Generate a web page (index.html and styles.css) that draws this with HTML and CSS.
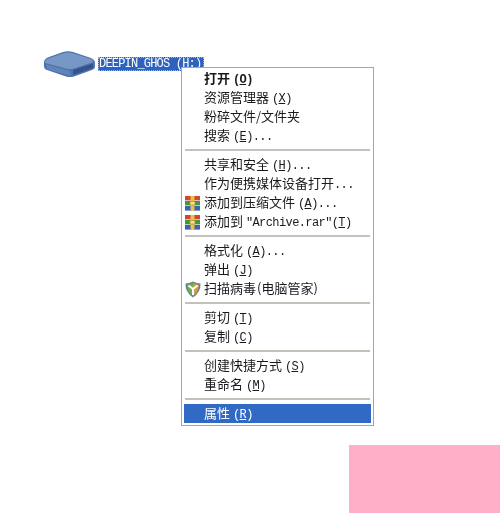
FILE: index.html
```html
<!DOCTYPE html>
<html lang="zh">
<head>
<meta charset="utf-8">
<title>右键菜单</title>
<link rel="stylesheet" href="styles.css">
</head>
<body>
<svg width="0" height="0" class="defs">
  <defs>
    <g id="rar">
      <rect x="0" y="0" width="7" height="4.4" fill="#d8452e"/>
      <rect x="8" y="0" width="7" height="4.4" fill="#d8452e"/>
      <rect x="0" y="5" width="7" height="4.4" fill="#3f9a3c"/>
      <rect x="8" y="5" width="7" height="4.4" fill="#3f9a3c"/>
      <rect x="0" y="10" width="7" height="4.6" fill="#3a62b8"/>
      <rect x="8" y="10" width="7" height="4.6" fill="#3a62b8"/>
      <rect x="5.5" y="0" width="4" height="14.6" fill="#e9c04a"/>
      <rect x="5" y="5.5" width="5" height="3.5" fill="#f6e08c" stroke="#a5822a" stroke-width=".6"/>
    </g>
  </defs>
</svg>
<div class="desktop">
  <svg class="drive" width="53" height="28" viewBox="0 0 53 28">
    <path d="M1 12 Q1 9 6 7 L20 2 Q25 0.5 30 2 L48 8 Q52 10 52 13 V17 Q52 19 49 20 L31 26.5 Q27 27.5 23 26.5 L4 20 Q1 19 1 16 Z" fill="#4f73ab"/>
    <path d="M2 11 Q3 9 7 8 L21 3 Q25 2 29 3 L48 9 Q51 10.5 49 12.5 L31 18.5 Q27 19.5 23 18.5 L4 13.5 Q1 12.5 2 11 Z" fill="#7797c6"/>
    <path d="M30 20 L50 13.5 V18 L30 25 Z" fill="#34528d"/>
    <path d="M3 14.5 L26 20.5 L28 26 L4 19 Z" fill="#5f84bb"/>
  </svg>
  <span class="drive-label">DEEPIN_GHOS (H:)</span>
</div>
<div class="menu">
  <div class="item strong">打开 <span class="lat">(<u>O</u>)</span></div>
  <div class="item">资源管理器 <span class="lat">(<u>X</u>)</span></div>
  <div class="item">粉碎文件/文件夹</div>
  <div class="item">搜索 <span class="lat">(<u>E</u>)...</span></div>
  <div class="sep"></div>
  <div class="item">共享和安全 <span class="lat">(<u>H</u>)...</span></div>
  <div class="item">作为便携媒体设备打开<span class="lat">...</span></div>
  <div class="item"><svg class="icon icon-rar" width="15" height="15" viewBox="0 0 15 15"><use href="#rar"/></svg>添加到压缩文件 <span class="lat">(<u>A</u>)...</span></div>
  <div class="item"><svg class="icon icon-rar" width="15" height="15" viewBox="0 0 15 15"><use href="#rar"/></svg>添加到 <span class="lat">"Archive.rar"(<u>T</u>)</span></div>
  <div class="sep"></div>
  <div class="item">格式化 <span class="lat">(<u>A</u>)...</span></div>
  <div class="item">弹出 <span class="lat">(<u>J</u>)</span></div>
  <div class="item"><svg class="icon" width="16" height="17" viewBox="0 0 16 17">
    <path d="M8 0.5 Q12 2.5 15.5 2.5 Q16 11 8 16.5 Q0 11 0.5 2.5 Q4 2.5 8 0.5 Z" fill="#5d8a90"/>
    <path d="M8 2 Q11 3.5 14 3.8 Q14 10.5 8 15 Z" fill="#d99a3a"/>
    <path d="M8 2 Q5 3.5 2 3.8 Q2 10.5 8 15 Z" fill="#6fae4a"/>
    <path d="M3.5 4.5 L8 8 L12.5 4.5 M8 8 V14" fill="none" stroke="#fff" stroke-width="2"/>
  </svg>扫描病毒<span class="paren">(电脑管家)</span></div>
  <div class="sep"></div>
  <div class="item">剪切 <span class="lat">(<u>T</u>)</span></div>
  <div class="item">复制 <span class="lat">(<u>C</u>)</span></div>
  <div class="sep"></div>
  <div class="item">创建快捷方式 <span class="lat">(<u>S</u>)</span></div>
  <div class="item">重命名 <span class="lat">(<u>M</u>)</span></div>
  <div class="sep"></div>
  <div class="item active">属性 <span class="lat">(<u>R</u>)</span></div>
</div>
<div class="pink"></div>
</body>
</html>
```
FILE: styles.css
```css
* { box-sizing: border-box; }
html, body { margin: 0; height: 513px; overflow: hidden; background: #fff; }
body { position: relative; font-family: "Noto Sans CJK SC", "Liberation Sans", sans-serif; color: #1a1a1a; }
.defs { position: absolute; }
.desktop { display: flex; align-items: flex-start; padding: 50px 0 0 43px; filter: blur(.3px); }
.drive { display: block; flex: none; }
.drive-label {
  margin: 7px 0 0 2px;
  width: 106px;
  height: 14px;
  background: #2f62bd;
  color: #fff;
  font: 12px/13px "Liberation Mono", monospace;
  letter-spacing: -.8px;
  white-space: pre;
  overflow: hidden;
  padding: 1px 0 0 1px;
  outline: 1px dotted #9fb6e0;
  outline-offset: -1px;
}
.menu {
  position: absolute;
  left: 181px;
  top: 67px;
  width: 193px;
  height: 359px;
  background: #fff;
  border: 1px solid #a6a6a0;
  padding: 1px 2px 2px;
  filter: blur(.3px);
}
.item {
  position: relative;
  height: 19px;
  padding-left: 20px;
  font-size: 13px;
  line-height: 17px;
  white-space: nowrap;
}
.strong { font-weight: 700; }
.lat { font: 12px/17px "Liberation Mono", monospace; letter-spacing: -.6px; }
.strong .lat { font-weight: 700; }
.paren { margin-left: 1px; }
.icon { position: absolute; left: 1px; top: 2px; }
.icon-rar { top: 3px; }
.sep { height: 10px; padding: 4px 1px 0; }
.sep::before { content: ""; display: block; height: 2px; background: #c2c2ba; }
.active { background: #316ac5; color: #fff; }
.pink { position: absolute; left: 349px; top: 445px; width: 151px; height: 68px; background: #ffb0c8; }
```
